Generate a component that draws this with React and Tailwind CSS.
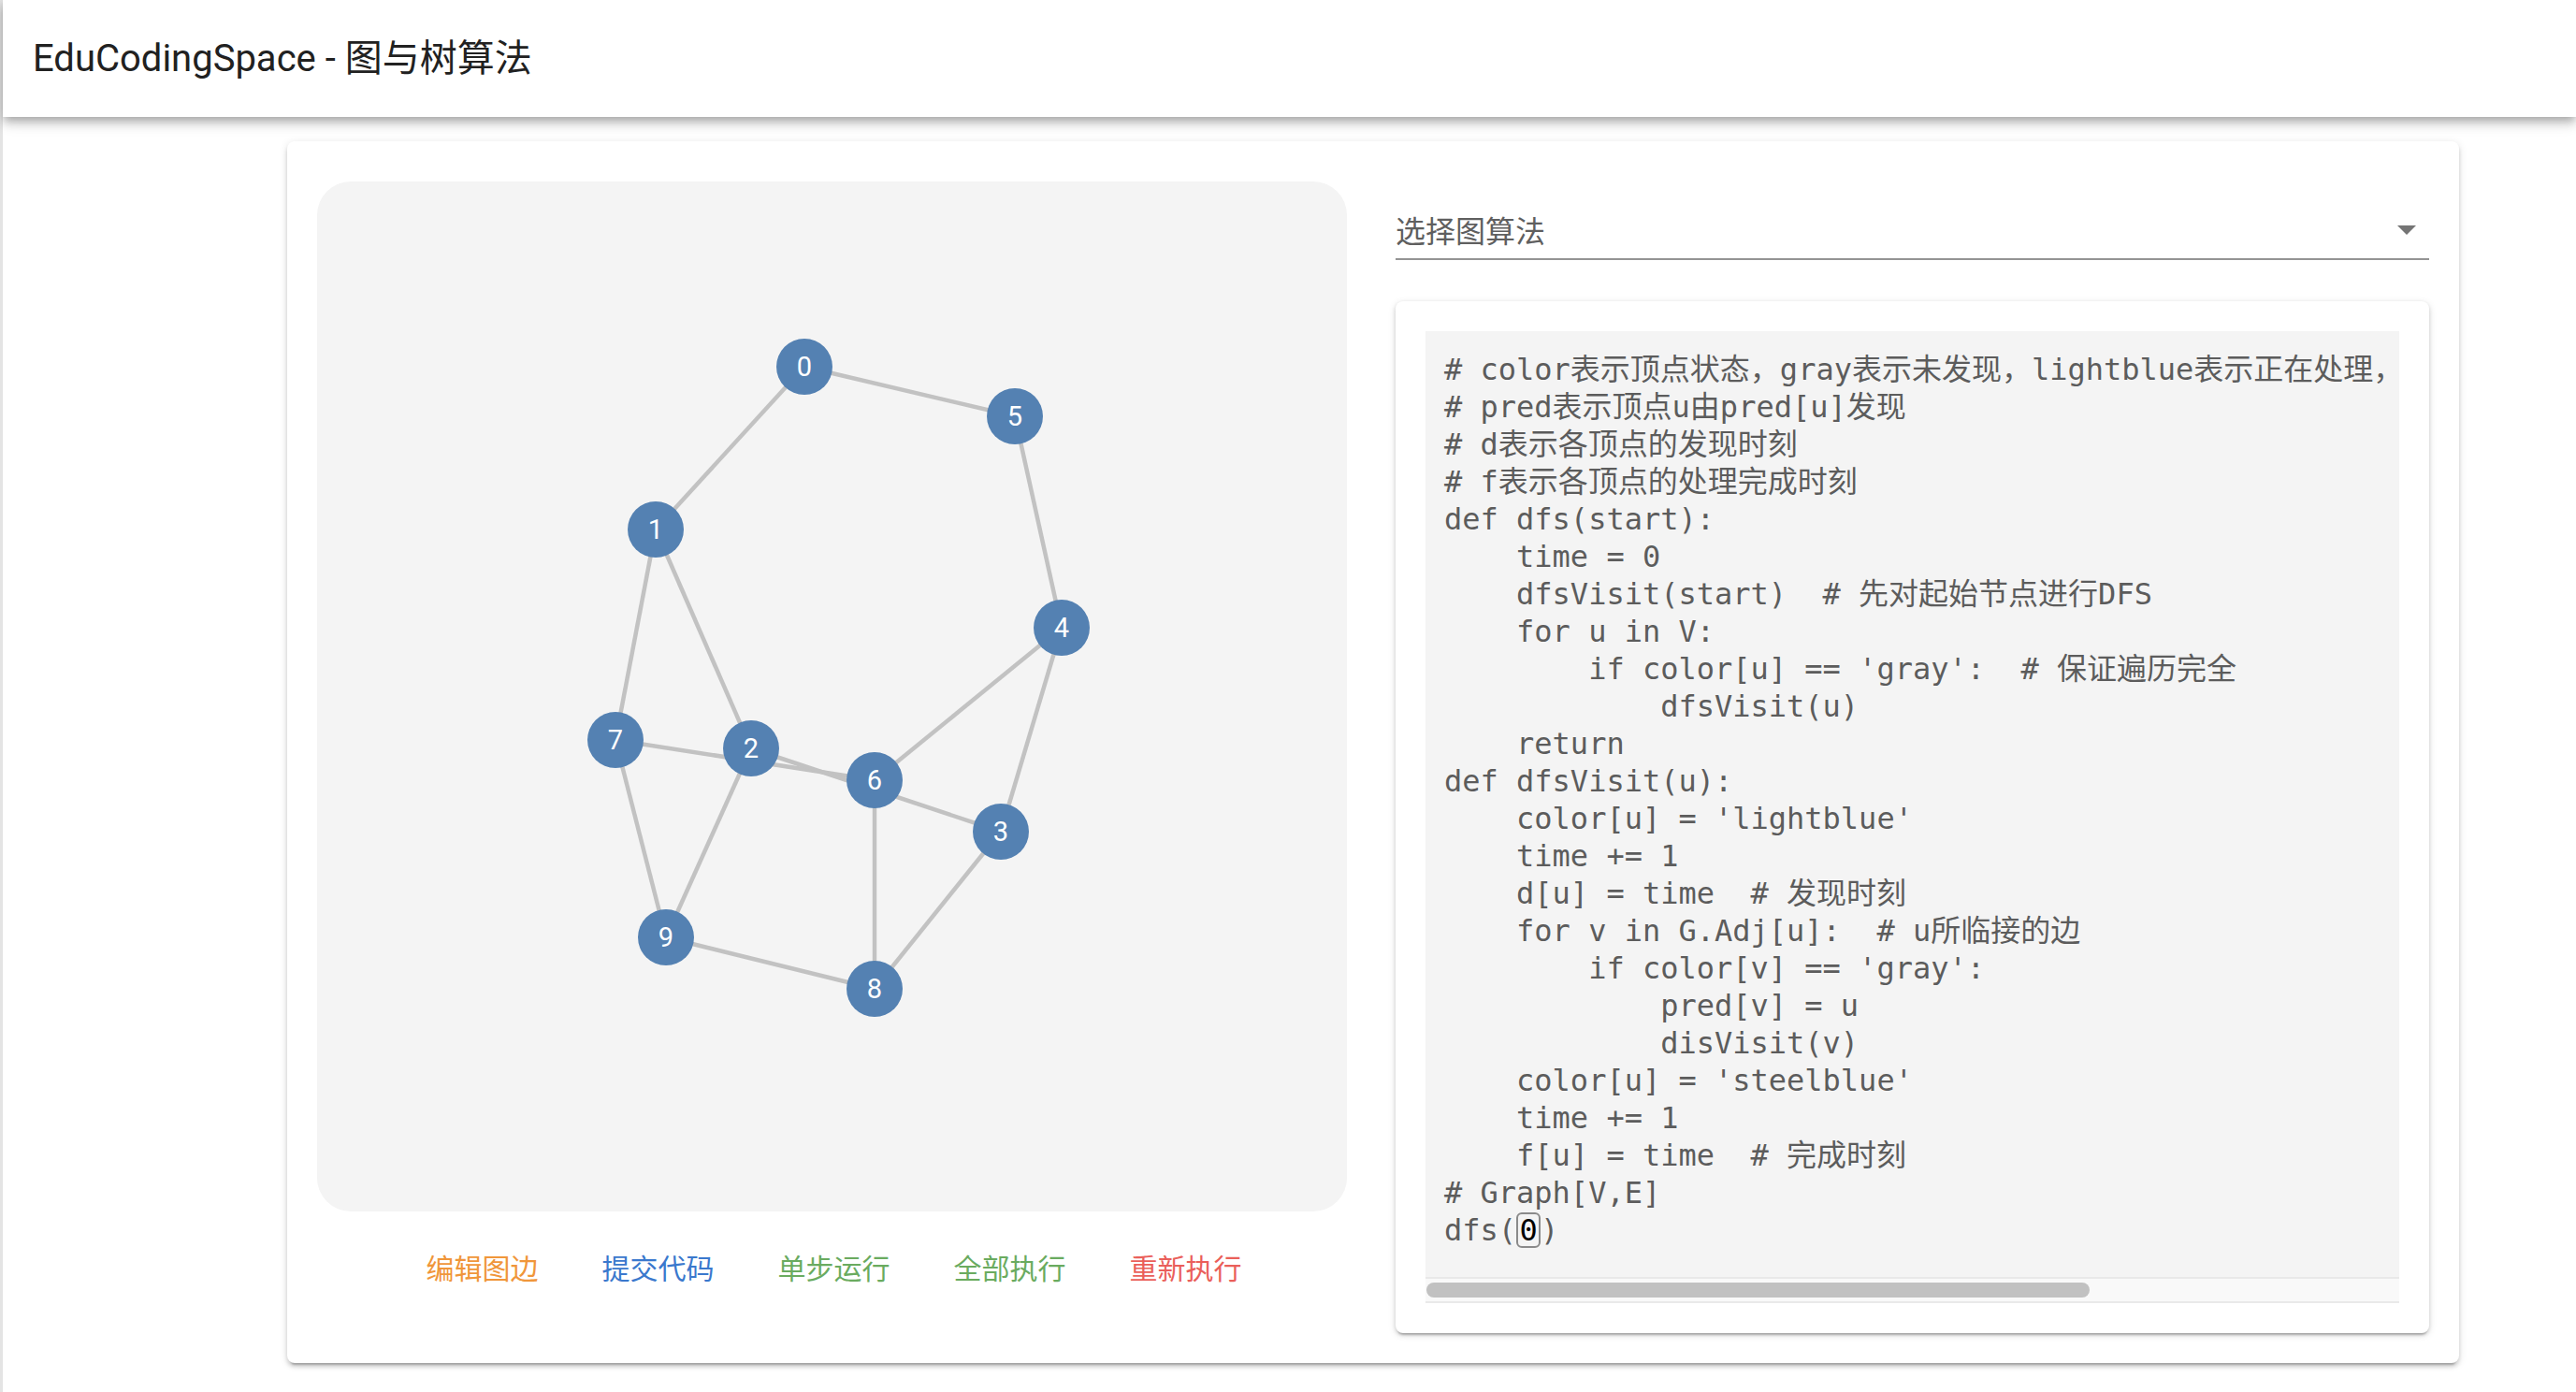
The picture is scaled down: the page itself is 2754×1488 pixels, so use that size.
import React from 'react';

// node positions inside the 1101x1101 graph panel
const nodes = [
  { id: 0, x: 521, y: 198 },
  { id: 1, x: 362, y: 372 },
  { id: 2, x: 464, y: 606 },
  { id: 3, x: 731, y: 695 },
  { id: 4, x: 796, y: 477 },
  { id: 5, x: 746, y: 251 },
  { id: 6, x: 596, y: 640 },
  { id: 7, x: 319, y: 597 },
  { id: 8, x: 596, y: 863 },
  { id: 9, x: 373, y: 808 },
];

const edges = [
  [0, 5], [0, 1], [5, 4], [1, 7], [1, 2], [4, 6], [4, 3],
  [7, 6], [2, 3], [6, 8], [3, 8], [2, 9], [7, 9], [9, 8],
];

const code = [
  '# color表示顶点状态，gray表示未发现，lightblue表示正在处理，steelblue表示处理完成',
  '# pred表示顶点u由pred[u]发现',
  '# d表示各顶点的发现时刻',
  '# f表示各顶点的处理完成时刻',
  'def dfs(start):',
  '    time = 0',
  '    dfsVisit(start)  # 先对起始节点进行DFS',
  '    for u in V:',
  "        if color[u] == 'gray':  # 保证遍历完全",
  '            dfsVisit(u)',
  '    return',
  'def dfsVisit(u):',
  "    color[u] = 'lightblue'",
  '    time += 1',
  '    d[u] = time  # 发现时刻',
  '    for v in G.Adj[u]:  # u所临接的边',
  "        if color[v] == 'gray':",
  '            pred[v] = u',
  '            disVisit(v)',
  "    color[u] = 'steelblue'",
  '    time += 1',
  '    f[u] = time  # 完成时刻',
  '# Graph[V,E]',
];

const actions = [
  { label: '编辑图边', cls: 'text-[#f0963a]' },
  { label: '提交代码', cls: 'text-[#3a78cd]' },
  { label: '单步运行', cls: 'text-[#6aab5f]' },
  { label: '全部执行', cls: 'text-[#6aab5f]' },
  { label: '重新执行', cls: 'text-[#ea5f5a]' },
];

const GraphView = () => {
  const byId = (id) => nodes.find((n) => n.id === id);
  return (
    <svg viewBox="0 0 1101 1101" className="w-full h-full">
      {edges.map(([a, b]) => {
        const p = byId(a);
        const q = byId(b);
        return <line key={`${a}-${b}`} x1={p.x} y1={p.y} x2={q.x} y2={q.y} stroke="#c2c2c2" strokeWidth="4.5" />;
      })}
      {nodes.map((n) => (
        <g key={n.id}>
          <circle cx={n.x} cy={n.y} r="30" fill="#5481b2" />
          <text
            x={n.x}
            y={n.y + 10}
            textAnchor="middle"
            fill="#ffffff"
            fontSize="29"
            fontFamily="Roboto, 'Liberation Sans', sans-serif"
          >
            {n.id}
          </text>
        </g>
      ))}
    </svg>
  );
};

const App = () => {
  return (
    <div className="min-h-screen bg-white border-l-[3px] border-[#e4e4e4] font-['Roboto','Noto_Sans_CJK_SC',sans-serif]">
      {/* top bar */}
      <header className="h-[125px] bg-white flex items-center pl-[32px] shadow-[0_4px_8px_-2px_rgba(0,0,0,0.2),0_8px_10px_0_rgba(0,0,0,0.14),0_2px_20px_0_rgba(0,0,0,0.12)] relative z-10">
        <h1 className="text-[40px] text-[#212121] font-normal">EduCodingSpace - 图与树算法</h1>
      </header>

      <main className="pt-[26px] pl-[304px] pb-[30px]">
        <div className="w-[2322px] bg-white rounded-[8px] px-[32px] pt-[43px] pb-[32px] shadow-[0_6px_2px_-4px_rgba(0,0,0,0.2),0_4px_4px_0_rgba(0,0,0,0.14),0_2px_10px_0_rgba(0,0,0,0.12)] grid grid-cols-[1101px_1105px] gap-x-[52px]">
          {/* left: graph + actions */}
          <div className="flex flex-col">
            <div className="w-[1101px] h-[1101px] bg-[#f4f4f4] rounded-[36px]">
              <GraphView />
            </div>
            <div className="mt-[30px] h-[58px] flex justify-center items-center pl-[4px]">
              {actions.map((a) => (
                <button key={a.label} className={`w-[188px] text-center text-[30px] leading-none font-['Noto_Sans_CJK_SC',sans-serif] ${a.cls}`}>
                  {a.label}
                </button>
              ))}
            </div>
          </div>

          {/* right: select + code */}
          <div className="flex flex-col">
            <div className="h-[84px] pt-[20px] border-b-2 border-[#949494] flex items-center justify-between">
              <span className="text-[32px] text-[#5f5f5f] font-['Noto_Sans_CJK_SC',sans-serif] leading-none">选择图算法</span>
              <svg viewBox="0 0 24 24" className="w-[48px] h-[48px] fill-[#757575]">
                <path d="M7 10l5 5 5-5z" />
              </svg>
            </div>

            <div className="mt-[44px] bg-white rounded-[8px] p-[32px] shadow-[0_4px_2px_-2px_rgba(0,0,0,0.2),0_2px_4px_0_rgba(0,0,0,0.14),0_2px_8px_0_rgba(0,0,0,0.12)]">
              <div className="bg-[#f4f4f4]">
                <pre className="overflow-hidden pl-[20px] pt-[21px] pb-[30px] text-[32px] leading-[40px] text-[#5c5c5c] font-['DejaVu_Sans_Mono','Noto_Sans_CJK_SC',monospace]">
                  {code.map((line, i) => (
                    <div key={i} className="whitespace-pre h-[40px]">{line}</div>
                  ))}
                  <div className="whitespace-pre h-[40px] flex items-center">
                    dfs(
                    <span className="inline-flex items-center justify-center w-[26px] h-[38px] border-2 border-[#8a8a8a] rounded-[6px] text-black">0</span>
                    )
                  </div>
                </pre>
                {/* horizontal scrollbar */}
                <div className="h-[28px] bg-[#f9f9f9] border-t-2 border-b-2 border-[#e9e9e9] flex items-center pl-[1px]">
                  <div className="w-[709px] h-[16px] rounded-full bg-[#c1c1c1]" />
                </div>
              </div>
            </div>
          </div>
        </div>
      </main>
    </div>
  );
};

export default App;
